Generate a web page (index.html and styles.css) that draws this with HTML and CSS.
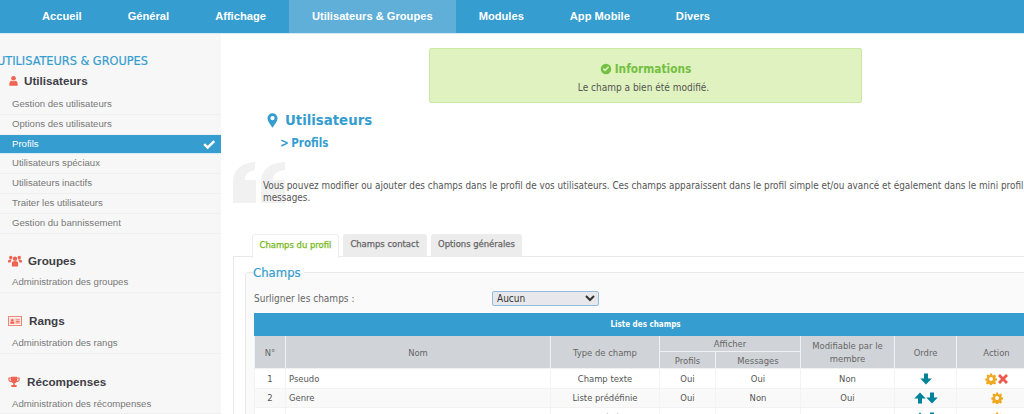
FILE: index.html
```html
<!DOCTYPE html>
<html lang="fr">
<head>
<meta charset="utf-8">
<title>Utilisateurs - Profils</title>
<link rel="stylesheet" href="styles.css">
</head>
<body>
<svg class="defs" width="0" height="0" aria-hidden="true">
  <defs>
    <symbol id="gear" viewBox="0 0 24 24"><path fill-rule="evenodd" d="M10 1h4l.7 3.2 1.900.8 2.800-1.800 2.800 2.800-1.800 2.800.8 1.900 3.200.3v4l-3.200.7-.8 1.900 1.800 2.800-2.800 2.800-2.800-1.800-1.900.8-.7 3.200h-4l-.7-3.200-1.900-.8-2.800 1.800-2.800-2.800 1.800-2.800-.8-1.900L.6 15v-4l3.200-.7.8-1.900-1.800-2.800 2.800-2.800 2.800 1.800 1.900-.8zM12 8a4 4 0 1 0 0 8 4 4 0 0 0 0-8z"/></symbol>
    <symbol id="x" viewBox="0 0 24 24"><path d="M6 2l6 6 6-6 4 4-6 6 6 6-4 4-6-6-6 6-4-4 6-6-6-6z"/></symbol>
    <symbol id="down" viewBox="0 0 24 24"><path d="M8 1h8v10h7.500L12 23 .5 11H8z"/></symbol>
    <symbol id="up" viewBox="0 0 24 24"><path d="M8 23h8V13h7.500L12 1 .5 13H8z"/></symbol>
  </defs>
</svg>
<nav class="topnav">
  <a class="nav-item">Accueil</a>
  <a class="nav-item">Général</a>
  <a class="nav-item">Affichage</a>
  <a class="nav-item active">Utilisateurs &amp; Groupes</a>
  <a class="nav-item">Modules</a>
  <a class="nav-item">App Mobile</a>
  <a class="nav-item">Divers</a>
</nav>
<div class="layout">
  <aside class="sidebar">
    <h2 class="side-title">UTILISATEURS &amp; GROUPES</h2>
    <section class="side-group first">
      <h3 class="side-head"><svg class="side-icon user" viewBox="0 0 16 16"><circle cx="8" cy="4" r="3.400"/><path d="M2 15v-3.500C2 9 4 8 5.500 7.500 7 8.500 9 8.500 10.500 7.500 12 8 14 9 14 11.500V15z"/></svg>Utilisateurs</h3>
      <ul class="side-list">
        <li>Gestion des utilisateurs</li>
        <li>Options des utilisateurs</li>
        <li class="current">Profils<svg class="check" viewBox="0 0 16 12"><path d="M1.500 6.500l2-2 3 3L13 1l2 2-8.500 8.500z"/></svg></li>
        <li>Utilisateurs spéciaux</li>
        <li>Utilisateurs inactifs</li>
        <li>Traiter les utilisateurs</li>
        <li>Gestion du bannissement</li>
      </ul>
    </section>
    <section class="side-group">
      <h3 class="side-head"><svg class="side-icon wide" viewBox="0 0 18 16"><circle cx="9" cy="5" r="2.800"/><circle cx="3.500" cy="3.500" r="2.200"/><circle cx="14.500" cy="3.500" r="2.200"/><path d="M5 15v-4.500C5 9 6.500 8 9 8s4 1 4 2.500V15zM0 10V8c0-1 1-2 3.500-2 .5 0 1 0 1.500.5-1 .7-1.500 2-1.500 3.500zM18 10V8c0-1-1-2-3.500-2-.5 0-1 0-1.500.5 1 .7 1.500 2 1.500 3.500z"/></svg>Groupes</h3>
      <ul class="side-list"><li>Administration des groupes</li></ul>
    </section>
    <section class="side-group">
      <h3 class="side-head"><svg class="side-icon card" viewBox="0 0 18 14"><path fill-rule="evenodd" d="M0 1h18v12H0zM1 2v10h16V2z"/><rect x="2" y="3" width="14" height="8" fill="#fbd8d2"/><circle cx="5.500" cy="6" r="1.500"/><path d="M3 10.500V9c0-.7 1-1.200 2.500-1.200S8 8.300 8 9v1.500z"/><path d="M10 5h5v1h-5zM10 7h5v1h-5zM10 9h5v1h-5z"/></svg>Rangs</h3>
      <ul class="side-list"><li>Administration des rangs</li></ul>
    </section>
    <section class="side-group">
      <h3 class="side-head"><svg class="side-icon trophy" viewBox="0 0 16 16"><path fill-rule="evenodd" d="M4 1h8v1h3.500v2.500c0 2-1.500 3.300-4 3.600C10.800 9 10 9.500 9 9.800V12h2.500v2.500h-7V12H7V9.800C6 9.500 5.200 9 4.500 8.100 2 7.800.5 6.500.5 4.500V2H4zM2 3.300v1.200c0 1 .7 1.800 2 2.100-.2-1-.3-2.100-.3-3.300zM14 3.300h-1.700c0 1.200-.1 2.300-.3 3.300 1.300-.3 2-1.100 2-2.100z"/></svg>Récompenses</h3>
      <ul class="side-list"><li>Administration des récompenses</li></ul>
    </section>
  </aside>
  <main class="content">
    <div class="alert">
      <div class="alert-title"><svg class="alert-icon" viewBox="0 0 16 16"><path fill-rule="evenodd" d="M8 1a7 7 0 1 1 0 14A7 7 0 0 1 8 1zM3.800 8.200l3 3 5.400-5.400-1.400-1.400-4 4-1.600-1.600z"/></svg>Informations</div>
      <p class="alert-text">Le champ a bien été modifié.</p>
    </div>
    <h1 class="page-title"><svg class="pin" viewBox="0 0 12 16"><path fill-rule="evenodd" d="M6 0a5.500 5.500 0 0 1 5.500 5.500C11.500 9 8 12.500 6 16 4 12.500.5 9 .5 5.500A5.500 5.500 0 0 1 6 0zm0 3.200a2.300 2.300 0 1 0 0 4.600 2.300 2.300 0 0 0 0-4.600z"/></svg>Utilisateurs</h1>
    <h2 class="page-sub">&gt; Profils</h2>
    <div class="intro">
      <svg class="quote" viewBox="0 0 52 41"><path d="M0 41V20C0 8 8 1 22 0v8c-7 1-10 5-10 10h11v23zM28 41V20C28 8 36 1 52 0v8c-9 1-12 5-12 10h12v23z"/></svg>
      <p class="intro-text">Vous pouvez modifier ou ajouter des champs dans le profil de vos utilisateurs. Ces champs apparaissent dans le profil simple et/ou avancé et également dans le mini profil des messages.</p>
    </div>
    <div class="tabs">
      <span class="tab selected">Champs du profil</span>
      <span class="tab">Champs contact</span>
      <span class="tab">Options générales</span>
    </div>
    <div class="panel">
      <div class="fieldset">
        <div class="legend">Champs</div>
        <div class="form-row">
          <label class="form-label">Surligner les champs :</label>
          <select class="form-select"><option>Aucun</option></select>
        </div>
        <table class="fields">
          <colgroup>
            <col class="c1"><col class="c2"><col class="c3"><col class="c4"><col class="c5"><col class="c6"><col class="c7"><col class="c8">
          </colgroup>
          <thead>
            <tr><th class="caption" colspan="8">Liste des champs</th></tr>
            <tr class="h1">
              <th rowspan="2">N°</th>
              <th rowspan="2">Nom</th>
              <th rowspan="2">Type de champ</th>
              <th colspan="2">Afficher</th>
              <th rowspan="2">Modifiable par le membre</th>
              <th rowspan="2">Ordre</th>
              <th rowspan="2">Action</th>
            </tr>
            <tr class="h2"><th>Profils</th><th>Messages</th></tr>
          </thead>
          <tbody>
            <tr>
              <td>1</td><td class="left">Pseudo</td><td>Champ texte</td><td>Oui</td><td>Oui</td><td>Non</td>
              <td><svg class="ic arrow"><use href="#down"/></svg></td>
              <td><svg class="ic gear"><use href="#gear"/></svg><svg class="ic del"><use href="#x"/></svg></td>
            </tr>
            <tr class="alt">
              <td>2</td><td class="left">Genre</td><td>Liste prédéfinie</td><td>Oui</td><td>Non</td><td>Oui</td>
              <td><svg class="ic arrow"><use href="#up"/></svg><svg class="ic arrow"><use href="#down"/></svg></td>
              <td><svg class="ic gear"><use href="#gear"/></svg></td>
            </tr>
            <tr>
              <td>3</td><td class="left">Taille</td><td>Liste prédéfinie</td><td>Non</td><td>Non</td><td>Non</td>
              <td><svg class="ic arrow"><use href="#up"/></svg><svg class="ic arrow"><use href="#down"/></svg></td>
              <td><svg class="ic gear"><use href="#gear"/></svg></td>
            </tr>
          </tbody>
        </table>
      </div>
    </div>
  </main>
</div>
</body>
</html>
```
FILE: styles.css
```css
* { box-sizing: border-box; }
html, body { margin: 0; padding: 0; height: 414px; overflow: hidden; background: #fff; }
body { width: 1024px; font-family: "DejaVu Sans Condensed", "DejaVu Sans", sans-serif; font-stretch: condensed; color: #555; }
.defs { display: block; height: 0; }

.topnav { display: flex; height: 34px; padding-left: 19px; background: #359dcf; border-bottom: 1px solid #d5ebf5; }
.nav-item { display: block; padding: 0 23px; font: bold 11.150px/33px "Liberation Sans", sans-serif; color: #fff; }
.nav-item.active { background: #5fafd9; }

.layout { display: flex; height: 380px; }
.sidebar { flex: 0 0 221px; height: 100%; overflow: hidden; background: #f7f7f7; font-family: "Liberation Sans", sans-serif; }
.side-title { margin: 18px 0 0 -3px; font-family: "DejaVu Sans Condensed", "DejaVu Sans", sans-serif; font-size: 12.600px; line-height: 17px; font-weight: normal; color: #359dcf; white-space: nowrap; -webkit-text-stroke: .2px #359dcf; }
.side-group { margin-top: 18.500px; }
.side-group.first { margin: 2px 0 -1.500px; }
.side-group.first .side-list { margin-top: 4px; }
.side-head { display: flex; align-items: center; margin: 0; padding-left: 8px; height: 20px; font: bold 11.700px/20px "Liberation Sans", sans-serif; color: #3e3e46; }
.side-icon { height: 14px; fill: #ef6350; }
.side-icon.user { width: 11px; margin-right: 5px; }
.side-icon.wide { width: 14px; margin-right: 6px; }
.side-icon.card { width: 14px; margin-right: 7px; }
.side-icon.trophy { width: 12px; margin-right: 7px; }
.side-list { list-style: none; margin: 2.500px 0 0; padding: 0; }
.side-list li { position: relative; height: 19.800px; padding-left: 12px; font-size: 9.600px; line-height: 18.800px; color: #777; border-bottom: 1px solid #efefef; }
.side-list li.current { background: #359dcf; color: #fff; border-bottom-color: #d5ebf5; }
.check { position: absolute; top: 4px; right: 5px; width: 14px; height: 11px; fill: #fff; }

.content { flex: 0 0 auto; width: 803px; min-width: 0; }
.alert { width: 433px; height: 55px; margin: 14px 0 0 208px; text-align: center; background: #dff2bf; border: 1px solid #cbe8a5; border-radius: 2px; }
.alert-title { display: flex; justify-content: center; align-items: center; height: 18px; margin-top: 11px; font-size: 11.800px; font-weight: bold; color: #74c043; }
.alert-icon { width: 12px; height: 12px; margin-right: 3px; fill: #74c043; }
.alert-text { margin: 4px 0 0; padding-right: 4px; font-size: 10px; line-height: 12px; color: #555; }

.page-title { display: flex; align-items: center; margin: 7px 0 0 46px; font-size: 14.800px; line-height: 20px; font-weight: bold; color: #359dcf; }
.pin { width: 11px; height: 15px; margin-right: 7px; fill: #359dcf; }
.page-sub { margin: 5px 0 0 59px; font-size: 11.500px; line-height: 16px; font-weight: bold; word-spacing: -1px; color: #359dcf; }

.intro { position: relative; height: 69px; margin-top: 11px; padding: 18px 0 0 42px; }
.quote { position: absolute; left: 12px; top: 0; width: 52px; height: 41px; fill: #f1f1f1; }
.intro-text { position: relative; width: 800px; margin: 0; font-size: 9.850px; line-height: 12px; color: #555; }

.tabs { display: flex; gap: 4px; height: 26px; margin: 0 0 0 31px; }
.tab { height: 23px; margin-top: 3px; padding: 0 7.500px; font-size: 9.400px; line-height: 20px; color: #666; background: #ececec; border-radius: 3px 3px 0 0; -webkit-text-stroke: .25px currentColor; }
.tab.selected { height: 24px; padding: 0 6.500px; color: #74b816; background: #fff; border: 1px solid #eee; border-bottom: 0; }

.panel { width: 900px; height: 200px; margin: -1px 0 0 12px; padding: 15px 0 0 11px; border: 1px solid #e9e9e9; }
.fieldset { position: relative; width: 860px; height: 190px; padding: 18px 0 0 8px; background: #fafafa; border: 1px solid #e9e9e9; border-radius: 3px; }
.legend { position: absolute; top: -8px; left: 7px; padding-right: 3px; font-size: 13px; line-height: 16px; font-weight: normal; color: #359dcf; background: linear-gradient(#fff 50%, #fafafa 50%); -webkit-text-stroke: .2px #359dcf; }
.form-row { display: flex; align-items: center; height: 14px; }
.form-label { flex: 0 0 238px; font-size: 10px; color: #666; }
.form-select { width: 107px; height: 15px; padding: 0; font: 10px "DejaVu Sans Condensed", "DejaVu Sans", sans-serif; color: #333; background: #e8e8ec; border: 1px solid #8fbfdf; border-radius: 2px; }

.fields { width: 782px; margin-top: 8px; table-layout: fixed; border-collapse: collapse; font-size: 9.400px; color: #555; }
.c1 { width: 31px; } .c2 { width: 265px; } .c3 { width: 109px; } .c4 { width: 56px; }
.c5 { width: 85px; } .c6 { width: 94px; } .c7 { width: 62px; } .c8 { width: 80px; }
.fields th { padding: 0 3px; font-weight: normal; color: #666; background: #d0d4d8; border: 1px solid #eff1f2; line-height: 13px; }
.fields th.caption { height: 22px; font-size: 8px; font-weight: bold; color: #fff; background: #359dcf; border-color: #359dcf; }
.h1 th { height: 16px; }
.h2 th { height: 17px; }
.fields td { height: 19.500px; padding: 0 3px; text-align: center; background: #fff; border-left: 1px solid #f3f3f3; border-bottom: 1px solid #f3f3f3; white-space: nowrap; }
.fields tr.alt td { background: #f9f9f9; }
.fields td.left { text-align: left; }
.ic { display: inline-block; width: 12px; height: 12px; vertical-align: middle; }
.arrow { fill: #008299; }
.gear { fill: #f0a81e; }
.del { fill: #ef5a4c; }
```
